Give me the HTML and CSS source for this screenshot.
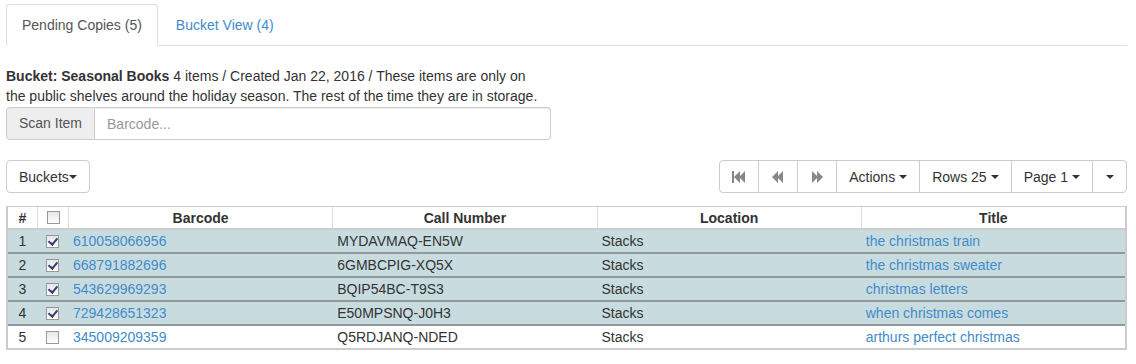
FILE: index.html
```html
<!DOCTYPE html>
<html lang="en">
<head>
    <meta charset="UTF-8">
    <title>Copy Buckets</title>
    <link rel="stylesheet" href="styles.css">
</head>
<body>
    <div class="page">
        <ul class="nav-tabs">
            <li class="tab active"><a>Pending Copies (5)</a></li>
            <li class="tab"><a>Bucket View (4)</a></li>
        </ul>

        <div class="bucket-info">
            <p class="summary"><strong>Bucket: Seasonal Books</strong> 4 items / Created Jan 22, 2016 / These items are only on<br>the public shelves around the holiday season. The rest of the time they are in storage.</p>
            <div class="input-group">
                <span class="addon">Scan Item</span>
                <input type="text" class="form-input" placeholder="Barcode...">
            </div>
        </div>

        <div class="toolbar">
            <button class="btn">Buckets<span class="caret tight"></span></button>
            <div class="btn-group">
                <button class="btn icon-btn">
                    <svg width="14" height="12" viewBox="0 0 14 12"><rect x="0" y="0" width="2" height="12" fill="#888"/><path d="M2 6 L8 0 V12 Z M7 6 L13 0 V12 Z" fill="#888"/></svg>
                </button>
                <button class="btn icon-btn">
                    <svg width="12" height="12" viewBox="0 0 12 12"><path d="M0 6 L6 0 V12 Z M5 6 L11 0 V12 Z" fill="#888"/></svg>
                </button>
                <button class="btn icon-btn">
                    <svg width="12" height="12" viewBox="0 0 12 12"><path d="M1 0 L7 6 L1 12 Z M6 0 L12 6 L6 12 Z" fill="#888"/></svg>
                </button>
                <button class="btn">Actions <span class="caret"></span></button>
                <button class="btn">Rows 25 <span class="caret"></span></button>
                <button class="btn">Page 1 <span class="caret"></span></button>
                <button class="btn"><span class="caret"></span></button>
            </div>
        </div>

        <table class="grid">
            <thead>
                <tr>
                    <th class="col-num">#</th>
                    <th class="col-check"><span class="box"></span></th>
                    <th>Barcode</th>
                    <th>Call Number</th>
                    <th>Location</th>
                    <th>Title</th>
                </tr>
            </thead>
            <tbody>
                <tr class="selected">
                    <td class="col-num">1</td>
                    <td class="col-check"><span class="box checked"></span></td>
                    <td><a>610058066956</a></td>
                    <td>MYDAVMAQ-EN5W</td>
                    <td>Stacks</td>
                    <td><a>the christmas train</a></td>
                </tr>
                <tr class="selected">
                    <td class="col-num">2</td>
                    <td class="col-check"><span class="box checked"></span></td>
                    <td><a>668791882696</a></td>
                    <td>6GMBCPIG-XQ5X</td>
                    <td>Stacks</td>
                    <td><a>the christmas sweater</a></td>
                </tr>
                <tr class="selected">
                    <td class="col-num">3</td>
                    <td class="col-check"><span class="box checked"></span></td>
                    <td><a>543629969293</a></td>
                    <td>BQIP54BC-T9S3</td>
                    <td>Stacks</td>
                    <td><a>christmas letters</a></td>
                </tr>
                <tr class="selected">
                    <td class="col-num">4</td>
                    <td class="col-check"><span class="box checked"></span></td>
                    <td><a>729428651323</a></td>
                    <td>E50MPSNQ-J0H3</td>
                    <td>Stacks</td>
                    <td><a>when christmas comes</a></td>
                </tr>
                <tr>
                    <td class="col-num">5</td>
                    <td class="col-check"><span class="box"></span></td>
                    <td><a>345009209359</a></td>
                    <td>Q5RDJANQ-NDED</td>
                    <td>Stacks</td>
                    <td><a>arthurs perfect christmas</a></td>
                </tr>
            </tbody>
        </table>
    </div>
</body>
</html>
```

FILE: styles.css
```css
* {
    box-sizing: border-box;
    margin: 0;
    padding: 0;
}

body {
    font-family: 'Liberation Sans', Arial, sans-serif;
    font-size: 14px;
    line-height: 20px;
    color: #333;
    background-color: #fff;
}

.page {
    padding: 4px 9px 0 6px;
}

a {
    color: #428bca;
    text-decoration: none;
}

/* tabs */
.nav-tabs {
    list-style: none;
    display: flex;
    border-bottom: 1px solid #ddd;
}

.tab {
    margin-right: 2px;
    margin-bottom: -1px;
}

.tab a {
    display: block;
    padding: 10px 15px;
    border: 1px solid transparent;
    border-radius: 4px 4px 0 0;
}

.tab.active a {
    color: #555;
    background-color: #fff;
    border-color: #ddd #ddd transparent;
}

/* bucket summary */
.bucket-info {
    width: 545px;
    margin-top: 20px;
}

.input-group {
    display: flex;
    height: 33px;
    margin-top: 1px;
}

.addon {
    padding: 6px 12px;
    background-color: #eee;
    color: #555;
    border: 1px solid #ccc;
    border-radius: 4px 0 0 4px;
    line-height: 19px;
}

.form-input {
    flex: 1;
    padding: 6px 12px;
    font-family: inherit;
    font-size: 14px;
    color: #555;
    border: 1px solid #ccc;
    border-left: none;
    border-radius: 0 4px 4px 0;
    box-shadow: inset 0 1px 1px rgba(0, 0, 0, 0.075);
}

.form-input::placeholder {
    color: #999;
}

/* toolbar */
.toolbar {
    display: flex;
    justify-content: space-between;
    margin-top: 20px;
}

.btn {
    display: inline-flex;
    align-items: center;
    justify-content: center;
    height: 33px;
    padding: 6px 12px;
    font-family: inherit;
    font-size: 14px;
    color: #333;
    background-color: #fff;
    border: 1px solid #ccc;
    border-radius: 4px;
}

.btn-group {
    display: flex;
}

.btn-group .btn {
    border-radius: 0;
    margin-left: -1px;
}

.btn-group .btn:first-child {
    border-radius: 4px 0 0 4px;
    margin-left: 0;
}

.btn-group .btn:last-child {
    border-radius: 0 4px 4px 0;
    width: 35px;
}

.icon-btn {
    width: 40px;
}

.caret {
    display: inline-block;
    width: 0;
    height: 0;
    margin-left: 4px;
    border-top: 4px solid #333;
    border-left: 4px solid transparent;
    border-right: 4px solid transparent;
}

.caret.tight {
    margin-left: 0;
}

.btn-group .btn:last-child .caret {
    margin-left: 0;
}

/* grid */
.grid {
    width: 100%;
    margin-top: 13px;
    table-layout: fixed;
    border-collapse: separate;
    border-spacing: 0;
    border: 2px solid #ccc;
    border-top-width: 1px;
}

.grid th {
    font-weight: bold;
    text-align: center;
    vertical-align: top;
    padding: 2px 5px 0;
    line-height: 19px;
    border-left: 1px solid #ddd;
    border-bottom: 2px solid #ccc;
}

.grid th:first-child {
    border-left: none;
}

.grid td {
    padding: 1px 5px;
    line-height: 20px;
    vertical-align: top;
}

.grid .col-num {
    width: 29px;
    padding-left: 0;
    padding-right: 0;
    text-align: center;
}

.grid .col-check {
    width: 31px;
    padding-left: 0;
    padding-right: 0;
    text-align: center;
}

.grid tr.selected td {
    background-color: #c8dce0;
    border-bottom: 2px solid #8f9a9d;
}

.box {
    display: inline-block;
    width: 13px;
    height: 13px;
    vertical-align: top;
    margin-top: 4px;
    border: 1px solid #999;
    background: linear-gradient(#e6e6e6, #fff);
    position: relative;
}

th .box {
    margin-top: 2px;
}

.box.checked::after {
    content: '';
    position: absolute;
    left: 3px;
    top: 0;
    width: 4px;
    height: 7px;
    border-right: 2px solid #3a4070;
    border-bottom: 2px solid #3a4070;
    transform: rotate(40deg);
}
```
